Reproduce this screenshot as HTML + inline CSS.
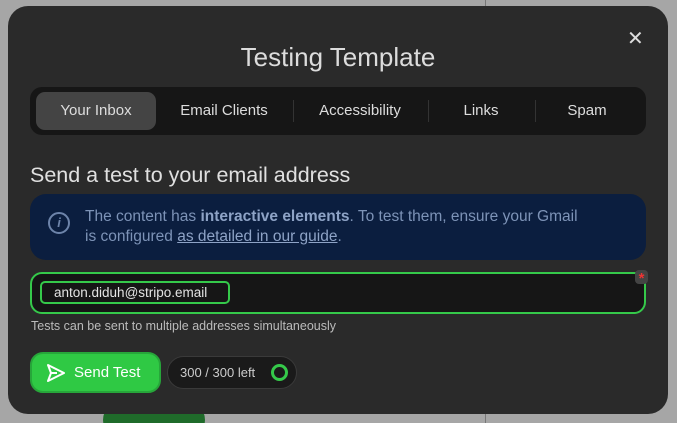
<!DOCTYPE html>
<html><head><style>
*{margin:0;padding:0;box-sizing:border-box}
html,body{width:677px;height:423px;overflow:hidden}
body{background:#a6a6a6;position:relative;font-family:"Liberation Sans",sans-serif}
.vl{position:absolute;left:485px;width:1px;background:#777}
.blob{position:absolute;left:103px;top:400px;width:102px;height:40px;border-radius:20px;background:#1f6b2a}
.m{position:absolute;left:8px;top:6px;width:660px;height:408px;background:#2a2a2a;border-radius:20px}
.t{position:absolute;top:36px;left:0;width:660px;text-align:center;color:#dcdcdc;font-size:26px}
.x{position:absolute;left:619px;top:20px;color:#ddd;font-size:20px}
.tabs{position:absolute;left:22px;top:81px;width:616px;height:48px;background:#161616;border-radius:12px}
.tab{position:absolute;top:5px;height:38px;line-height:38px;color:#ddd;font-size:15px;text-align:center;width:130px}
.sep{position:absolute;top:13px;width:1px;height:22px;background:#333}
h2{position:absolute;left:22px;top:157px;color:#e0e0e0;font-size:21.5px;font-weight:normal}
.info{position:absolute;left:22px;top:188px;width:616px;height:66px;background:#0b1e3f;border-radius:16px;color:#7d93b7;font-size:15.5px;line-height:20px;padding:13px 0 0 55px}
.info b{color:#8ea3c6}
.info u{color:#8ea3c6}
.ic{position:absolute;left:18px;top:18px;width:22px;height:22px;border:2px solid #6d84aa;border-radius:50%;color:#6d84aa;font-size:13px;font-style:italic;text-align:center;line-height:18px;font-weight:bold}
.inp{position:absolute;left:22px;top:266px;width:616px;height:42px;border:2px solid #35c94a;border-radius:12px;background:#161616}
.chip{position:absolute;left:8px;top:7px;width:190px;height:23px;border:2px solid #35c94a;border-radius:5px;color:#e4e4e4;font-size:13.5px;line-height:19px;padding-left:12px}
.star{position:absolute;right:-4px;top:-4px;width:13px;height:14px;border-radius:4px;background:#444;color:#e33;font-size:15px;font-weight:bold;line-height:17px;text-align:center}
.hint{position:absolute;left:23px;top:313px;color:#bbb;font-size:12.5px}
.btn{position:absolute;left:22px;top:346px;width:131px;height:41px;background:#2fc944;border:2px solid #27a63a;border-radius:13px;color:#fff;font-size:15px;line-height:37px;padding-left:42px}
.cnt{position:absolute;left:159px;top:350px;width:130px;height:33px;background:#1a1a1a;border:1px solid #3a3a3a;border-radius:17px;color:#ccc;font-size:13px;line-height:31px;padding-left:12px}
.ring{position:absolute;left:103px;top:7px;width:17px;height:17px;border:3px solid #35c94a;border-radius:50%}
</style></head><body>
<div class="vl" style="top:0;height:8px"></div>
<div class="vl" style="top:412px;height:11px"></div>
<div class="blob"></div>
<div class="m">
<div class="t">Testing Template</div>
<div class="x">✕</div>
<div class="tabs">
<div class="tab" style="left:6px;width:120px;background:#444;border-radius:9px">Your Inbox</div>
<div class="tab" style="left:129px">Email Clients</div>
<div class="sep" style="left:263px"></div>
<div class="tab" style="left:265px">Accessibility</div>
<div class="sep" style="left:398px"></div>
<div class="tab" style="left:386px">Links</div>
<div class="sep" style="left:505px"></div>
<div class="tab" style="left:492px">Spam</div>
</div>
<h2>Send a test to your email address</h2>
<div class="info"><div class="ic">i</div>The content has <b>interactive elements</b>. To test them, ensure your Gmail<br>is configured <u>as detailed in our guide</u>.</div>
<div class="inp"><div class="chip">anton.diduh@stripo.email</div><div class="star">*</div></div>
<div class="hint">Tests can be sent to multiple addresses simultaneously</div>
<div class="btn"><svg style="position:absolute;left:14px;top:10px" width="20" height="18" viewBox="0 0 20 18"><path d="M2 1 L18 9 L2 17 L5 9 Z M5 9 H11" fill="none" stroke="#fff" stroke-width="2" stroke-linejoin="round"/></svg>Send Test</div>
<div class="cnt">300 / 300 left<div class="ring"></div></div>
</div>
</body></html>
